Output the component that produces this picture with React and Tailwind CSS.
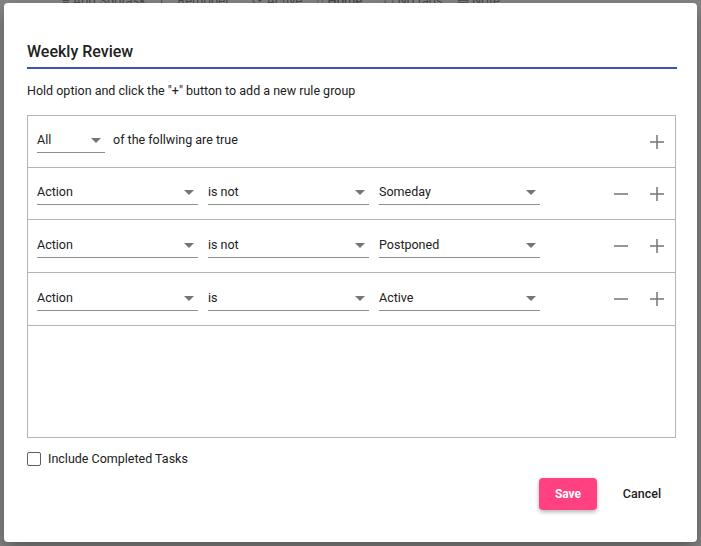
import { useState } from "react";

const rules = [
  { field: "Action", op: "is not", value: "Someday", h: "h-[52px]" },
  { field: "Action", op: "is not", value: "Postponed", h: "h-[53px]" },
  { field: "Action", op: "is", value: "Active", h: "h-[53px]" },
];

function Caret() {
  return (
    <svg width="10" height="5" viewBox="0 0 10 5" className="shrink-0">
      <path d="M0 0 L10 0 L5 5 Z" fill="#757575" />
    </svg>
  );
}

function Select({ value, width = "w-[161px]" }) {
  return (
    <div
      className={`${width} h-[23px] flex items-start justify-between border-b border-[#8f8f8f] pr-[4px]`}
    >
      <span className="pt-[2px] text-[12.5px] leading-[16px] text-[#212121]">{value}</span>
      <span className="pt-[8px]">
        <Caret />
      </span>
    </div>
  );
}

function PlusIcon() {
  return (
    <svg width="14" height="14" viewBox="0 0 14 14">
      <path d="M7 0 V14 M0 7 H14" stroke="#757575" strokeWidth="1.5" />
    </svg>
  );
}

function MinusIcon() {
  return (
    <svg width="14" height="14" viewBox="0 0 14 14">
      <path d="M0 7 H14" stroke="#757575" strokeWidth="1.5" />
    </svg>
  );
}

function IconBtn({ children }) {
  return (
    <button className="w-[24px] h-[24px] flex items-center justify-center">{children}</button>
  );
}

export default function App() {
  const [checked, setChecked] = useState(false);

  return (
    <div
      className="relative w-full h-[546px] overflow-hidden bg-[#858585] pt-[3px] pl-[4px] pr-[4px] pb-[4px]"
      style={{ fontFamily: "Roboto, 'Liberation Sans', sans-serif" }}
    >
      {/* page behind the backdrop */}
      <div className="absolute top-[-9px] left-[62px] flex items-center gap-[14px] text-[13px] text-[#4a4a4a]">
        <span>≡ Add Subtask</span>
        <span>|</span>
        <span>Remodel</span>
        <span className="ml-[10px]">⟳ Active</span>
        <span className="font-medium">⌂ Home</span>
        <span className="ml-[8px]">◇ No tags</span>
        <span>▤ Note</span>
      </div>

      {/* dialog */}
      <div className="relative h-full rounded-[4px] bg-white shadow-[0_8px_20px_rgba(0,0,0,0.35)] pt-[39px] pl-[23px] pr-[20px] flex flex-col">
        <h2 className="text-[16px] leading-[20px] font-medium text-[#212121]">Weekly Review</h2>
        <div className="mt-[5px] h-[2px] bg-[#3f51b5]" />

        <p className="mt-[14px] text-[12.5px] leading-[16px] text-[#212121]">
          Hold option and click the "+" button to add a new rule group
        </p>

        <div className="mt-[16px] mr-[1px] h-[323px] border border-[#b3b3b3]">
          <div className="h-[52px] flex items-center pl-[9px] pr-[6px] border-b border-[#b3b3b3]">
            <Select value="All" width="w-[68px]" />
            <span className="ml-[8px] text-[12.5px] leading-[16px] text-[#212121] -mt-[4px]">
              of the follwing are true
            </span>
            <div className="flex-1" />
            <IconBtn>
              <PlusIcon />
            </IconBtn>
          </div>

          {rules.map((r, i) => (
            <div
              key={i}
              className={`${r.h} flex items-center gap-[10px] pl-[9px] pr-[6px] border-b border-[#b3b3b3]`}
            >
              <Select value={r.field} />
              <Select value={r.op} />
              <Select value={r.value} />
              <div className="flex-1" />
              <div className="flex items-center gap-[12px]">
                <IconBtn>
                  <MinusIcon />
                </IconBtn>
                <IconBtn>
                  <PlusIcon />
                </IconBtn>
              </div>
            </div>
          ))}
        </div>

        <label className="mt-[13px] flex items-center gap-[7px] cursor-pointer">
          <input
            type="checkbox"
            checked={checked}
            onChange={() => setChecked(!checked)}
            className="appearance-none w-[14px] h-[14px] rounded-[2px] border-[1.5px] border-[#5f5f5f] bg-white"
          />
          <span className="text-[12.5px] leading-[16px] text-[#212121]">Include Completed Tasks</span>
        </label>

        <div className="mt-[11px] flex justify-end items-center">
          <button className="w-[58px] h-[32px] rounded-[4px] bg-[#ff4081] text-white text-[12px] font-bold shadow-[0_2px_4px_rgba(0,0,0,0.3)]">
            Save
          </button>
          <button className="ml-[10px] w-[70px] h-[32px] text-[12.5px] font-medium text-[#212121]">
            Cancel
          </button>
        </div>
      </div>
    </div>
  );
}
